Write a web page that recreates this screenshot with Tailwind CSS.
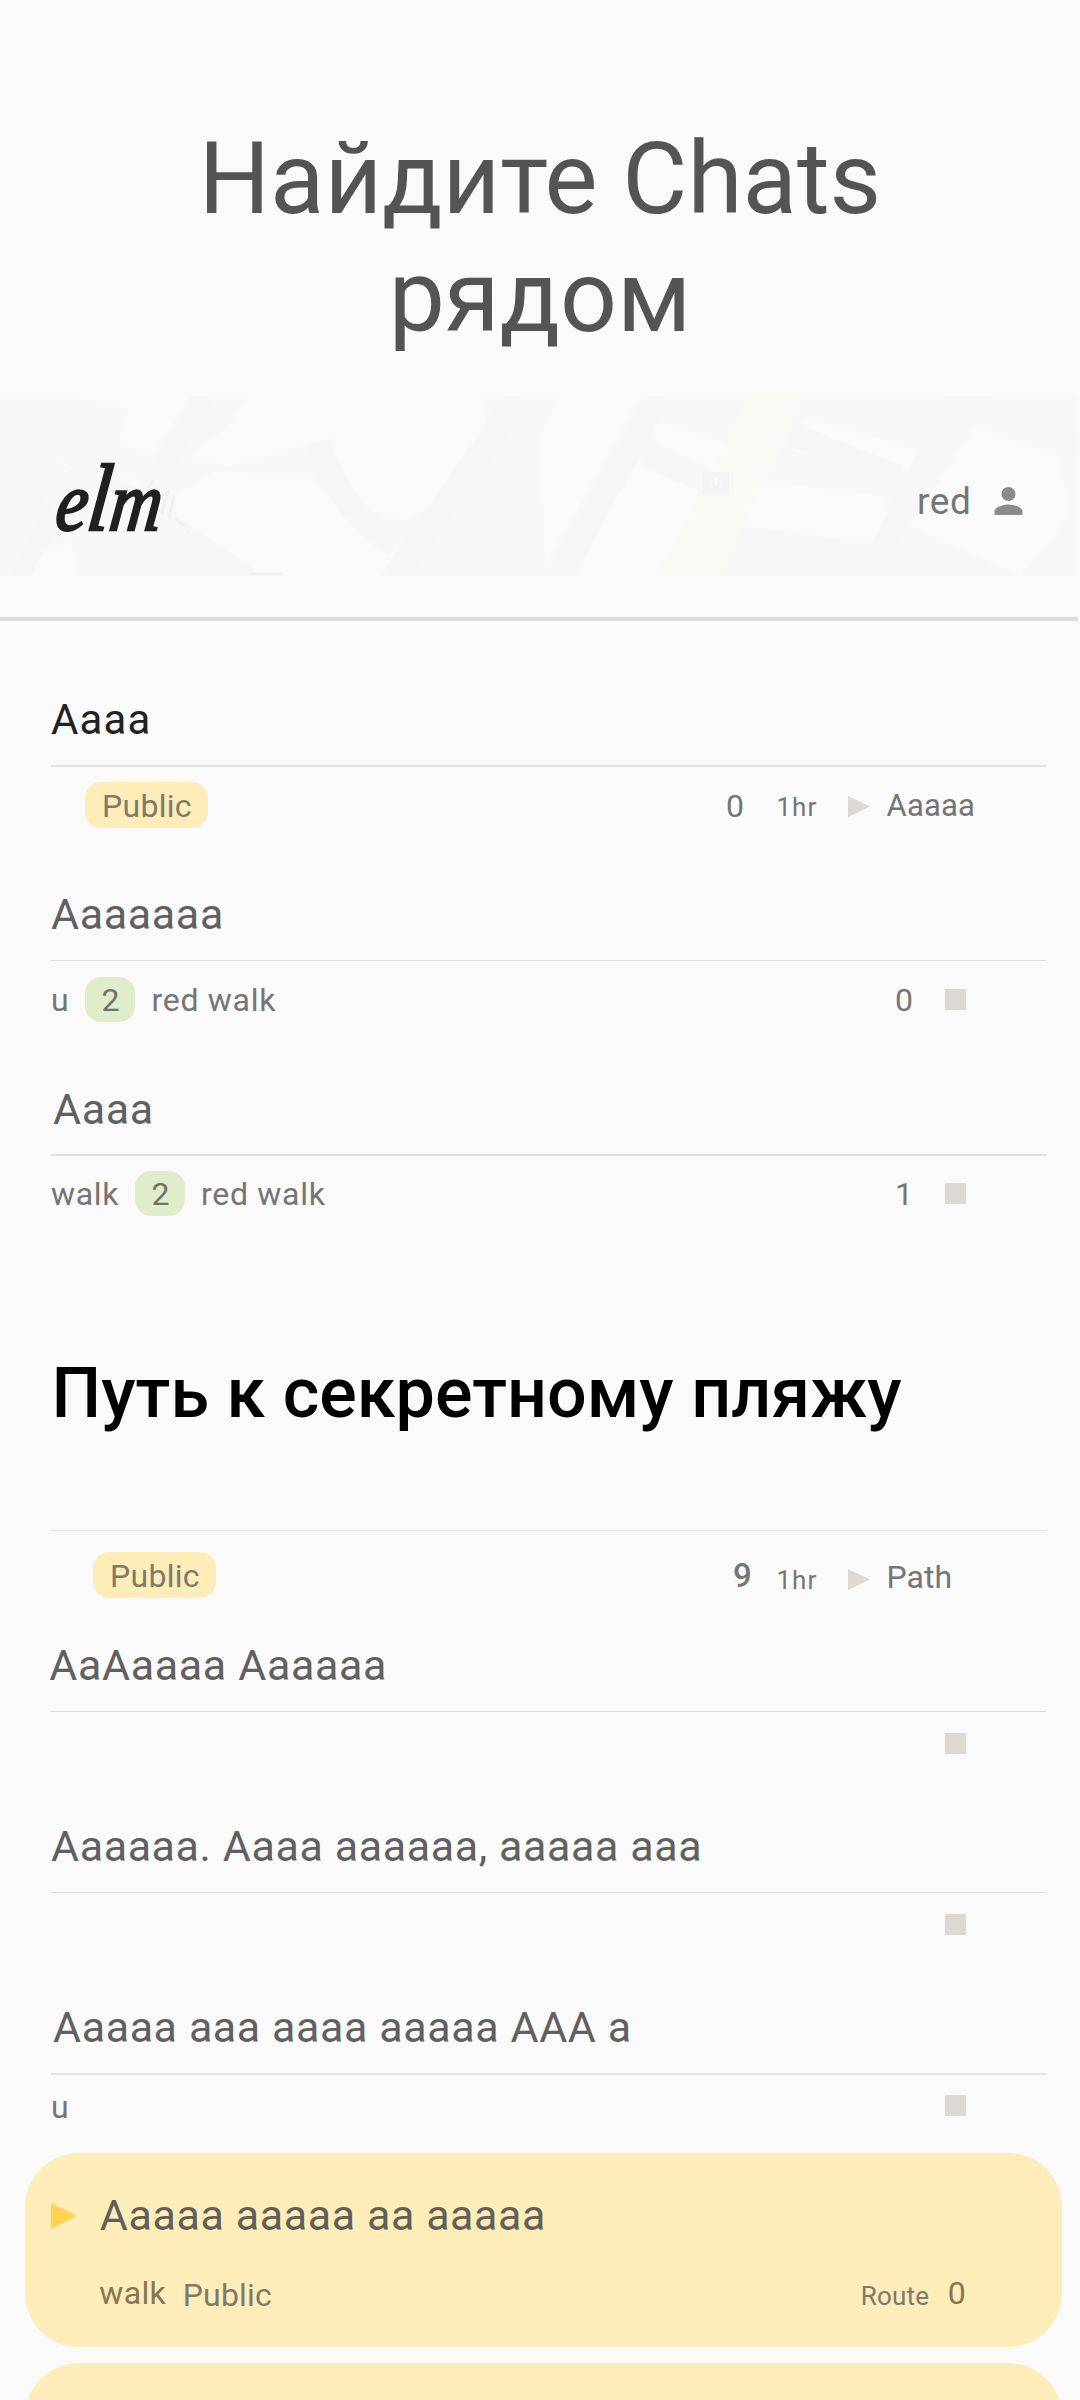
<!DOCTYPE html>
<html lang="ru">
<head>
<meta charset="utf-8">
<title>elm</title>
<script src="https://cdn.jsdelivr.net/npm/@tailwindcss/browser@4"></script>
</head>
<body class="bg-[#fafafa]">
<main class="w-[1080px] h-[2400px] overflow-hidden bg-[#fafafa] font-['Roboto',sans-serif] text-[#757575] flex flex-col [&>*]:shrink-0">

  <h1 class="h-[396px] pt-[120px] px-[180px] text-center text-[100px] leading-[118px] text-[#545454]">Найдите Chats рядом</h1>

  <header class="h-[225px] border-b-4 border-[#dcdcdc] w-[1078px]">
    <div class="grid h-[180px]">
      <!-- faded street map -->
      <svg class="col-start-1 row-start-1" width="1078" height="180" viewBox="0 0 1078 180">
        <rect width="1078" height="180" fill="#f8f8f8"/>
        <g fill="#fafafa">
          <path d="M70 0L130 14L118 46L152 60L190 0ZM56 62L145 86L150 100L56 68ZM32 160L70 145L80 180H30ZM190 62L228 30L250 0H480L488 40L430 110L405 125L340 105L318 45L230 70ZM175 100L215 75L310 80L345 120L400 150L380 180H260L180 135Z"/>
          <path d="M560 0H640L590 90L545 170L540 40ZM655 24L728 48L716 75L655 45ZM640 60L700 85L690 125L655 180H575ZM805 20L935 60L925 75L790 55ZM760 85L880 100L900 150L740 130ZM975 30L1060 60L1070 120L1020 180L910 130Z"/>
        </g>
        <g fill="none" stroke="#f7f7f7" stroke-width="24">
          <path d="M205 0L150 95L165 100M0 75L50 125L20 180M70 60L250 180" stroke-width="18"/>
          <path d="M520 0L395 180M320 45Q335 110 395 150"/>
          <path d="M660 0L560 180M645 60L705 85M790 38L900 80M955 0L870 180M960 0L1078 50M740 140L990 180" stroke-width="22"/>
        </g>
        <path d="M750 0H805L719 180H657Z" fill="#f9f9f6"/>
        <path d="M703 76H729V98H703Z" fill="#f4f4f4"/>
        <path d="M711 92V84M716 90V82M721 92V84" stroke="#f9f9f9" stroke-width="2"/>
        <path d="M133 92L142 100L154 84M142 100L140 110M160 101L167 97L162 118M174 100L169 121M176 122L184 130M187 136L190 137M250 178H282" fill="none" stroke="#f1f1f1" stroke-width="3"/>
      </svg>
      <div class="col-start-1 row-start-1 flex items-start pl-[52px]">
        <div class="mt-[60px] w-[865px] text-[#202020] italic leading-none text-[84px] font-['Liberation_Serif',serif] [-webkit-text-stroke:2.5px_#202020]"><span class="inline-flex items-baseline origin-bottom-left scale-x-[0.85] -skew-x-8"><span>e</span><span class="text-[95px] leading-[84px] -mb-[4px]">l</span><span>m</span></span></div>
        <span class="mt-[87px] w-[70px] text-[37px] leading-none tracking-[0.6px]">red</span>
        <svg class="mt-[84px] w-[43px] h-[42px]" viewBox="0 0 24 24" fill="#8b8b8b"><circle cx="12" cy="8" r="4"/><path d="M12 14C9.330 14 4 15.340 4 18V20H20V18C20 15.340 14.670 14 12 14Z"/></svg>
      </div>
    </div>
  </header>

  <h2 class="h-[144px] pt-[78px] pl-[51px] text-[42px] leading-none tracking-[1.1px] text-[#212121]">Aaaa</h2>
  <hr class="ml-[51px] w-[995px] border-0 h-[2px] bg-[#e1e1e1]">
  <div class="h-[73px] grid items-start grid-cols-[85px_641px_50.5px_71.5px_38.5px_1fr] text-[32px] leading-none">
    <span class="col-start-2 mt-[15px] w-[123px] h-[46px] rounded-[16px] bg-[#feedb9] pt-[8px] pl-[17px] tracking-[0.3px] text-[#807a6a]">Public</span>
    <span class="mt-[23px]">0</span>
    <span class="mt-[27px] text-[26px] leading-none tracking-[1px]">1hr</span>
    <svg class="mt-[29px]" width="22" height="21" viewBox="0 0 22 21"><path d="M0 0L22 10.500L0 21Z" fill="#dcd8d4"/></svg>
    <span class="mt-[23px] text-[31px] leading-none tracking-[0.2px]">Aaaaa</span>
  </div>

  <h2 class="h-[120px] pt-[53px] pl-[51px] text-[43px] leading-none tracking-[0.65px] text-[#606060]">Aaaaaaa</h2>
  <hr class="ml-[51px] w-[995px] border-0 h-px bg-[#e0e0e0]">
  <div class="h-[79px] grid items-start grid-cols-[34px_66.500px_743.500px_50px_1fr] pl-[51px] text-[32px] leading-none tracking-[0.7px]">
    <span class="mt-[23px]">u</span>
    <span class="mt-[16px] w-[50px] h-[45px] rounded-[16px] bg-[#dfedca] pt-[7px] pl-[16.500px] text-[#6e7565]">2</span>
    <span class="mt-[23px]">red walk</span>
    <span class="mt-[23px]">0</span>
    <i class="mt-[28px] size-[21px] bg-[#dcd8d4]"></i>
  </div>

  <h2 class="h-[114px] pt-[48px] pl-[53px] text-[43px] leading-none tracking-[0.65px] text-[#606060]">Aaaa</h2>
  <hr class="ml-[51px] w-[995px] border-0 h-[2px] bg-[#e1e1e1]">
  <div class="h-[84px] grid items-start grid-cols-[84px_66px_694px_50px_1fr] pl-[51px] text-[32px] leading-none tracking-[0.7px]">
    <span class="mt-[22px]">walk</span>
    <span class="mt-[15px] w-[50px] h-[45px] rounded-[16px] bg-[#dfedca] pt-[7px] pl-[16.500px] text-[#6e7565]">2</span>
    <span class="mt-[22px]">red walk</span>
    <span class="mt-[22px]">1</span>
    <i class="mt-[27px] size-[21px] bg-[#dcd8d4]"></i>
  </div>

  <h2 class="h-[290px] pt-[118px] pl-[51.500px] text-[70px] font-medium leading-none tracking-[0.05px] text-black whitespace-nowrap">Путь к секретному пляжу</h2>
  <hr class="ml-[51px] w-[995px] border-0 h-px bg-[#e0e0e0]">
  <div class="h-[89px] grid items-start grid-cols-[93px_640px_43.5px_71.5px_38.5px_1fr] text-[32px] leading-none">
    <span class="col-start-2 mt-[21px] w-[123px] h-[46px] rounded-[16px] bg-[#feedb9] pt-[8px] pl-[17px] tracking-[0.3px] text-[#807a6a]">Public</span>
    <span class="mt-[28px] text-[33px] leading-none font-medium">9</span>
    <span class="mt-[36px] text-[26px] leading-none tracking-[1px]">1hr</span>
    <svg class="mt-[37.5px]" width="22" height="21" viewBox="0 0 22 21"><path d="M0 0L22 10.500L0 21Z" fill="#dcd8d4"/></svg>
    <span class="mt-[30px]">Path</span>
  </div>

  <h2 class="h-[91px] pt-[24px] pl-[49.300px] text-[43px] leading-none tracking-[0.65px] text-[#606060]">AaAaaaa Aaaaaa</h2>
  <hr class="ml-[51px] w-[995px] border-0 h-px bg-[#dcdcdc]">
  <div class="h-[88px] pt-[21px] pl-[945px]"><div class="size-[21px] bg-[#dcd8d4]"></div></div>

  <h2 class="h-[92px] pt-[25px] pl-[51px] text-[43px] leading-none tracking-[0.6px] text-[#606060]">Aaaaaa. Aaaa aaaaaa, aaaaa aaa</h2>
  <hr class="ml-[51px] w-[995px] border-0 h-px bg-[#e0e0e0]">
  <div class="h-[87px] pt-[21px] pl-[945px]"><div class="size-[21px] bg-[#dcd8d4]"></div></div>

  <h2 class="h-[93px] pt-[26px] pl-[53px] text-[43px] leading-none tracking-[0.6px] text-[#606060]">Aaaaa aaa aaaa aaaaa AAA a</h2>
  <hr class="ml-[51px] w-[995px] border-0 h-[2px] bg-[#e4e4e4]">
  <div class="h-[78px] flex items-start pl-[51px] text-[32px] leading-none">
    <span class="w-[894px] mt-[16px]">u</span>
    <i class="mt-[20px] size-[21px] bg-[#dcd8d4]"></i>
  </div>

  <section class="ml-[24.5px] w-[1037.500px] h-[194px] rounded-[54px] bg-[#feedb9]">
    <div class="h-[130px] flex items-start pl-[26.500px]">
      <svg class="mt-[50px]" width="26" height="26" viewBox="0 0 26 26"><path d="M0 0L26 13L0 26Z" fill="#fdd44f"/></svg>
      <h2 class="mt-[41px] ml-[22.800px] text-[43px] leading-none tracking-[0.6px] text-[#605f5a]">Aaaaa aaaaa aa aaaaa</h2>
    </div>
    <div class="grid items-start grid-cols-[83.500px_678px_87px_1fr] -mt-[6px] pl-[74.700px] text-[32px] leading-none">
      <span class="tracking-[0.4px] text-[#857750]">walk</span>
      <span class="mt-[2px] tracking-[0.2px] text-[#7d7a6d]">Public</span>
      <span class="mt-[6px] text-[26px] leading-none tracking-[0.2px] text-[#7d7a6d]">Route</span>
      <span class="text-[#857750]">0</span>
    </div>
  </section>
  <section class="mt-[16px] ml-[24.5px] w-[1037.500px] h-[194px] rounded-[54px] bg-[#feedb9]"></section>
</main>
</body>
</html>
